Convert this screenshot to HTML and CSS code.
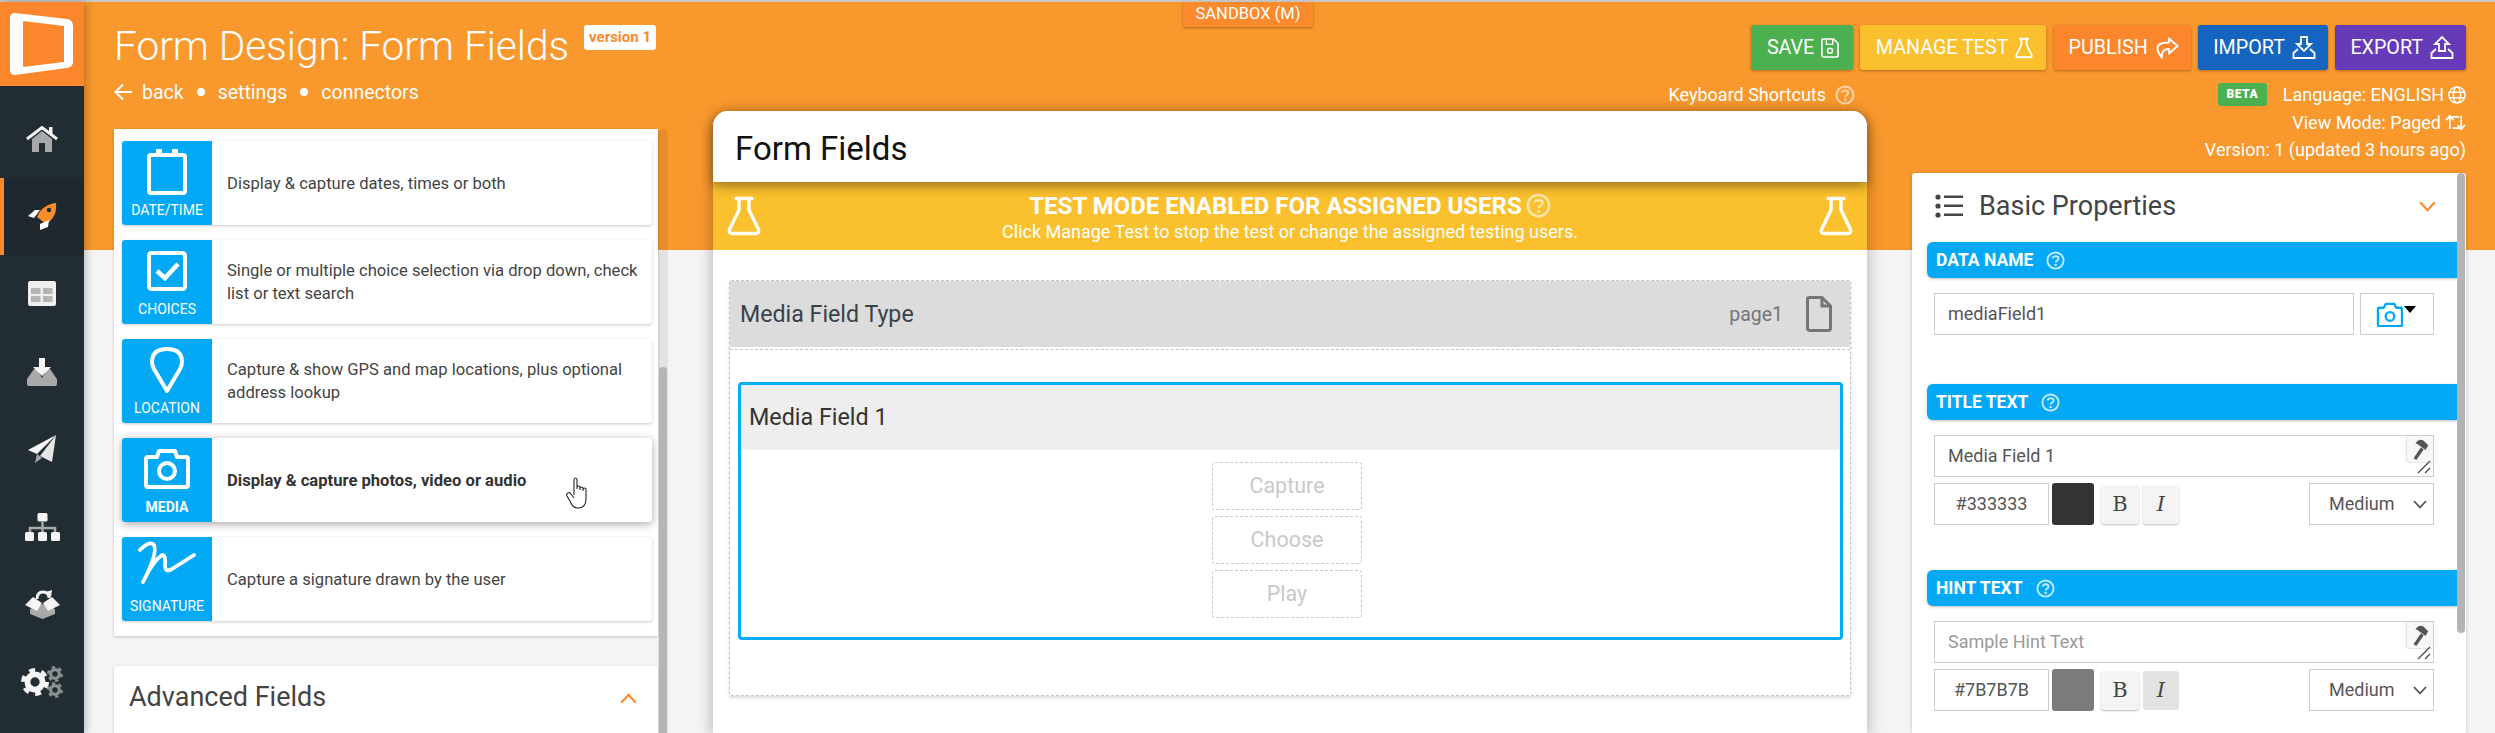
FILE: index.html
```html
<!DOCTYPE html>
<html lang="en">
<head>
<meta charset="utf-8">
<title>Form Design: Form Fields</title>
<link rel="stylesheet" href="styles.css">
</head>
<body>
<svg class="defs" width="0" height="0" aria-hidden="true">
  <symbol id="flask" viewBox="0 0 34 40"><path d="M9 2.500H25M12 2.500V14L2.500 33.500Q1.500 37.500 5.500 37.500H28.500Q32.500 37.500 31.500 33.500L22 14V2.500" fill="none" stroke="currentColor" stroke-width="3.400" stroke-linejoin="round" stroke-linecap="round"/></symbol>
  <symbol id="help" viewBox="0 0 20 20"><circle cx="10" cy="10" r="8.500" fill="none" stroke="currentColor" stroke-width="2"/><path d="M7 7.800C7 4.800 13.200 4.800 13.200 8C13.200 10 10.200 10 10.200 12.200" fill="none" stroke="currentColor" stroke-width="2"/><circle cx="10.200" cy="14.800" r="1.300" fill="currentColor"/></symbol>
  <symbol id="hammer" viewBox="0 0 20 24"><path d="M3 22 11 10 14 12.500 6 24Z" fill="#555"/><path d="M5 6Q9 0 14 3L19 8 16 13 8 7Q7 6 5 6Z" fill="#555"/></symbol>
  <symbol id="chev" viewBox="0 0 14 9"><path d="M1 1 7 7.500 13 1" fill="none" stroke="currentColor" stroke-width="1.800"/></symbol>
  <symbol id="gear" viewBox="0 0 24 24"><circle cx="12" cy="12" r="6.500" fill="none" stroke="currentColor" stroke-width="5"/><circle cx="12" cy="12" r="10" fill="none" stroke="currentColor" stroke-width="4" stroke-dasharray="5 5.470"/></symbol>
  <symbol id="grip" viewBox="0 0 14 14"><path d="M1 13 13 1M8 13 13 8" stroke="#444" stroke-width="1.200" fill="none"/></symbol>
</svg>
<div class="app">
  <nav class="sidebar">
    <div class="logo">
      <svg viewBox="0 0 84 84" width="84" height="84"><path fill-rule="evenodd" fill="#fff" d="M15 11 67 17Q73 18 73 24V60Q73 65 67 66L15 73Q10 73 10 68V16Q10 11 15 11ZM23 19V65L64 60V24Z"/></svg>
    </div>
    <ul class="nav">
      <li class="nav-item">
        <svg viewBox="0 0 32 26" width="32" height="26"><path d="M6 13 16 5 26 13V26H19V17H13V26H6Z" fill="#a7a9ab"/><path d="M1 13 16 1.500 31 13" fill="none" stroke="#f2f2f2" stroke-width="3"/><rect x="23" y="1" width="3.500" height="7" fill="#f2f2f2"/></svg>
      </li>
      <li class="nav-item is-active">
        <svg viewBox="0 0 29 29" width="29" height="29"><path d="M28 1C29 11 25 18 18 22L9 15C12 7 19 2 28 1Z" fill="#fb8c2c"/><circle cx="21" cy="8" r="2.300" fill="#212b31"/><path d="M0 14 7 8H12L6 16Z" fill="#fff"/><path d="M12 28 12 22 21 18 20 25Z" fill="#fff"/></svg>
      </li>
      <li class="nav-item">
        <svg viewBox="0 0 28 25" width="28" height="25"><rect width="28" height="25" rx="2" fill="#efefef"/><g fill="#b5b5b5"><rect x="3" y="7" width="9.500" height="6"/><rect x="15" y="7" width="9.500" height="6"/><rect x="3" y="15" width="9.500" height="6"/><rect x="15" y="15" width="9.500" height="6"/></g></svg>
      </li>
      <li class="nav-item">
        <svg viewBox="0 0 32 28" width="32" height="28"><path d="M8 11 1 21V26Q1 28 3 28H29Q31 28 31 26V21L24 11 21 11 16 20 11 11Z" fill="#a7a9ab"/><path d="M13 0H19V9H25L16 18 7 9H13Z" fill="#f5f5f5"/></svg>
      </li>
      <li class="nav-item">
        <svg viewBox="0 0 29 28" width="29" height="28"><path d="M0 15 28 0 9 19Z" fill="#f5f5f5"/><path d="M9 19 7 28 14 23Z" fill="#a7a9ab"/><path d="M28 0 24 27 12 21Z" fill="#e6e6e6"/></svg>
      </li>
      <li class="nav-item">
        <svg viewBox="0 0 35 28" width="35" height="28"><path d="M17.500 9V19M5 19V15H30V19" fill="none" stroke="#a7a9ab" stroke-width="2.500"/><g fill="#f5f5f5"><rect x="12.500" width="10" height="8.500" rx="1.500"/><rect y="19" width="9" height="9" rx="1.500"/><rect x="13" y="19" width="9" height="9" rx="1.500"/><rect x="26" y="19" width="9" height="9" rx="1.500"/></g></svg>
      </li>
      <li class="nav-item">
        <svg viewBox="0 0 35 29" width="35" height="29"><path d="M17.500 14 30 19V24L17.500 29 5 24V19Z" fill="#a7a9ab"/><path d="M0 15 8 7 17 13 12 21ZM35 15 27 7 18 13 23 21Z" fill="#f5f5f5"/><path d="M12 9Q12 2 18 2T24 8" fill="none" stroke="#f5f5f5" stroke-width="3"/><path d="M21 2 27 0 26 7Z" fill="#f5f5f5"/></svg>
      </li>
      <li class="nav-item">
        <div class="gears">
          <svg class="gear-big" width="28" height="28"><use href="#gear"/></svg>
          <div class="gears-small">
            <svg width="16" height="16"><use href="#gear"/></svg>
            <svg width="16" height="16"><use href="#gear"/></svg>
          </div>
        </div>
      </li>
    </ul>
  </nav>

  <main class="main">
    <div class="sandbox">SANDBOX (M)</div>

    <section class="col-left">
      <div class="title-row">
        <h1 class="page-title">Form Design: Form Fields</h1>
        <span class="version-badge">version 1</span>
      </div>
      <div class="crumbs">
        <svg width="18" height="18" viewBox="0 0 18 18"><path d="M9 1.500 1.500 9 9 16.500M1.500 9H18" fill="none" stroke="#fff" stroke-width="2"/></svg>
        <span class="crumb-back">back</span><i class="dot"></i><span>settings</span><i class="dot"></i><span>connectors</span>
      </div>

      <div class="scroll-track"><div class="scroll-thumb"></div></div>

      <div class="panel field-list">
        <article class="field-card">
          <div class="tile">
            <svg viewBox="0 0 40 46" width="40" height="46"><path d="M4 6H36Q38 6 38 8V42Q38 44 36 44H4Q2 44 2 42V8Q2 6 4 6Z" fill="none" stroke="#fff" stroke-width="4"/><rect x="9" width="6" height="8" rx="1" fill="#fff"/><rect x="25" width="6" height="8" rx="1" fill="#fff"/></svg>
            <span>DATE/TIME</span>
          </div>
          <p>Display &amp; capture dates, times or both</p>
        </article>
        <article class="field-card">
          <div class="tile">
            <svg viewBox="0 0 40 40" width="40" height="40"><rect x="2" y="2" width="36" height="36" rx="2.500" fill="none" stroke="#fff" stroke-width="4"/><path d="M10 20 18 27 31 13" fill="none" stroke="#fff" stroke-width="4.500"/></svg>
            <span>CHOICES</span>
          </div>
          <p>Single or multiple choice selection via drop down, check list or text search</p>
        </article>
        <article class="field-card">
          <div class="tile">
            <svg viewBox="0 0 34 46" width="34" height="46"><path d="M17 44 4 22Q2 18 2 15 2 2 17 2T32 15Q32 18 30 22Z" fill="none" stroke="#fff" stroke-width="4" stroke-linejoin="round"/></svg>
            <span>LOCATION</span>
          </div>
          <p>Capture &amp; show GPS and map locations, plus optional address lookup</p>
        </article>
        <article class="field-card is-hover">
          <div class="tile">
            <svg viewBox="0 0 46 40" width="46" height="40"><path d="M4 8H13L15 2H31L33 8H42Q44 8 44 10V36Q44 38 42 38H4Q2 38 2 36V10Q2 8 4 8Z" fill="none" stroke="#fff" stroke-width="4" stroke-linejoin="round"/><circle cx="23" cy="22" r="8" fill="none" stroke="#fff" stroke-width="4"/></svg>
            <span>MEDIA</span>
          </div>
          <p>Display &amp; capture photos, video or audio</p>
          <svg class="hand" viewBox="0 0 26 32" width="26" height="32"><path d="M8 18V3Q8 1 9.500 1T11 3V12M11 12V10.500Q11 9 12.500 9T14 10.500V13M14 11.500Q14 10 15.500 10T17 11.500V14M17 12.500Q17 11 18.500 11T20 12.500V22Q20 31 12 31 7 31 5 26L1 19Q0 17 2 16T5 17L8 21" fill="#fff" stroke="#222" stroke-width="1.100"/></svg>
        </article>
        <article class="field-card">
          <div class="tile">
            <svg class="sig-icon" viewBox="0 0 58 44" width="58" height="44"><path d="M2 9Q12-1 16 4 20 12 5 41 15 20 24 14 28 14 27 24 27 32 34 28L56 14" fill="none" stroke="#fff" stroke-width="3.800" stroke-linecap="round" stroke-linejoin="round"/></svg>
            <span>SIGNATURE</span>
          </div>
          <p>Capture a signature drawn by the user</p>
        </article>
      </div>

      <div class="panel advanced">
        <h2>Advanced Fields</h2>
        <svg class="adv-chev" width="17" height="11"><use href="#chev"/></svg>
      </div>
    </section>

    <div class="actions">
      <button class="btn btn-green">SAVE
        <svg viewBox="0 0 20 22" width="18" height="20"><path d="M2 1H14L19 6V19Q19 21 17 21H3Q1 21 1 19V2Z" fill="none" stroke="#fff" stroke-width="1.800"/><path d="M6 1V7H13V1" fill="none" stroke="#fff" stroke-width="1.600"/><circle cx="10" cy="14" r="2.800" fill="none" stroke="#fff" stroke-width="1.600"/></svg>
      </button>
      <button class="btn btn-yellow">MANAGE TEST <svg width="18" height="22"><use href="#flask"/></svg></button>
      <button class="btn btn-orange">PUBLISH
        <svg viewBox="0 0 24 22" width="24" height="22"><path d="M14 1.500 22.500 9 14 16.500V12Q6 12 7 20.500 1 14 3 9 5 5.500 14 5.500Z" fill="none" stroke="#fff" stroke-width="2" stroke-linejoin="round"/></svg>
      </button>
      <button class="btn btn-blue">IMPORT
        <svg viewBox="0 0 24 24" width="24" height="24"><path d="M9 1H15V8H19L12 15 5 8H9Z" fill="none" stroke="#fff" stroke-width="1.800"/><path d="M6 13 1.500 17V22H22.500V17L18 13" fill="none" stroke="#fff" stroke-width="1.800"/></svg>
      </button>
      <button class="btn btn-purple">EXPORT
        <svg viewBox="0 0 24 24" width="24" height="24"><path d="M9 15V8H5L12 1 19 8H15V15Z" fill="none" stroke="#fff" stroke-width="1.800"/><path d="M6 13 1.500 17V22H22.500V17L18 13" fill="none" stroke="#fff" stroke-width="1.800"/></svg>
      </button>
    </div>

    <section class="col-mid">
      <div class="shortcuts">Keyboard Shortcuts <svg class="help-soft" width="20" height="20"><use href="#help"/></svg></div>
      <div class="form-card">
        <header class="form-head">Form Fields</header>
        <div class="test-banner">
          <svg width="34" height="40"><use href="#flask"/></svg>
          <div class="test-text">
            <strong>TEST MODE ENABLED FOR ASSIGNED USERS <svg class="help-soft" width="25" height="25"><use href="#help"/></svg></strong>
            <span>Click Manage Test to stop the test or change the assigned testing users.</span>
          </div>
          <svg width="34" height="40"><use href="#flask"/></svg>
        </div>
        <div class="form-body">
          <div class="page-box">
            <div class="page-head">
              <span class="page-name">Media Field Type</span>
              <span class="page-id">page1</span>
              <svg viewBox="0 0 26 36" width="26" height="36"><path d="M3 1.500H16L24.500 10V32Q24.500 34.500 22 34.500H4Q1.500 34.500 1.500 32V3Q1.500 1.500 3 1.500Z" fill="none" stroke="#757575" stroke-width="3"/><path d="M16 1.500V10H24.500" fill="none" stroke="#757575" stroke-width="3"/></svg>
            </div>
            <div class="page-inner">
              <div class="media-field">
                <div class="media-head">Media Field 1</div>
                <div class="media-btns">
                  <div class="ghost-btn">Capture</div>
                  <div class="ghost-btn">Choose</div>
                  <div class="ghost-btn">Play</div>
                </div>
              </div>
            </div>
          </div>
        </div>
      </div>
    </section>

    <section class="col-right">
      <div class="info">
        <div class="info-line"><span class="beta">BETA</span>Language: ENGLISH
          <svg viewBox="0 0 20 20" width="18" height="18"><g fill="none" stroke="#fff" stroke-width="1.600"><circle cx="10" cy="10" r="9"/><ellipse cx="10" cy="10" rx="4" ry="9"/><path d="M1.500 7H18.500M1.500 13H18.500"/></g></svg>
        </div>
        <div class="info-line">View Mode: Paged
          <svg viewBox="0 0 22 18" width="21" height="17"><path d="M5 16V3M1 6.500 5 2 9 6.500M5 3H15M17 2V15M13 11.500 17 16 21 11.500M17 15H8" fill="none" stroke="#fff" stroke-width="1.800"/></svg>
        </div>
        <div class="info-line">Version: 1 (updated 3 hours ago)</div>
      </div>
      <div class="props">
        <div class="props-thumb"></div>
        <header class="props-head">
          <svg viewBox="0 0 28 24" width="28" height="24"><g fill="#444"><circle cx="3" cy="3" r="2.600"/><circle cx="3" cy="12" r="2.600"/><circle cx="3" cy="21" r="2.600"/><rect x="9" y="1.500" width="19" height="2.500"/><rect x="9" y="10.500" width="19" height="2.500"/><rect x="9" y="19.500" width="19" height="2.500"/></g></svg>
          <h2>Basic Properties</h2>
          <svg class="props-chev" width="17" height="11"><use href="#chev"/></svg>
        </header>

        <div class="prop-bar">DATA NAME <svg width="19" height="19"><use href="#help"/></svg></div>
        <div class="prop-row prop-name">
          <div class="box box-grow">mediaField1</div>
          <div class="box box-type">
            <svg viewBox="0 0 28 26" width="27" height="25"><path d="M3 6H8L10 2H19L21 6H26Q27 6 27 7V24Q27 25 26 25H3Q2 25 2 24V7Q2 6 3 6Z" fill="none" stroke="#03a9f4" stroke-width="2.400" stroke-linejoin="round"/><circle cx="14.500" cy="15" r="4.500" fill="none" stroke="#03a9f4" stroke-width="2.400"/></svg>
            <i class="caret"></i>
          </div>
        </div>

        <div class="prop-bar">TITLE TEXT <svg width="19" height="19"><use href="#help"/></svg></div>
        <div class="box box-text">Media Field 1
          <span class="hammer"><svg width="20" height="22"><use href="#hammer"/></svg></span>
          <svg class="grip" width="14" height="14"><use href="#grip"/></svg>
        </div>
        <div class="prop-row style-row">
          <div class="box box-hex">#333333</div>
          <div class="swatch swatch-dark"></div>
          <div class="fmt-btn fmt-b">B</div>
          <div class="fmt-btn fmt-i">I</div>
          <div class="box box-select">Medium <svg width="14" height="9"><use href="#chev"/></svg></div>
        </div>

        <div class="prop-bar">HINT TEXT <svg width="19" height="19"><use href="#help"/></svg></div>
        <div class="box box-text box-hint">Sample Hint Text
          <span class="hammer"><svg width="20" height="22"><use href="#hammer"/></svg></span>
          <svg class="grip" width="14" height="14"><use href="#grip"/></svg>
        </div>
        <div class="prop-row style-row">
          <div class="box box-hex">#7B7B7B</div>
          <div class="swatch swatch-mid"></div>
          <div class="fmt-btn fmt-b">B</div>
          <div class="fmt-btn fmt-i is-on">I</div>
          <div class="box box-select">Medium <svg width="14" height="9"><use href="#chev"/></svg></div>
        </div>
      </div>
    </section>
  </main>
</div>
</body>
</html>
```

FILE: styles.css
```css
* { box-sizing: border-box; }
html, body { margin: 0; height: 100%; overflow: hidden; }
body { font-family: Roboto, "Liberation Sans", sans-serif; color: #444; background: #f4f4f4; }
.defs { position: absolute; }
h1, h2, p, ul { margin: 0; padding: 0; font-weight: inherit; }

.app { display: flex; height: 733px; border-top: 2px solid #c9c9c9; }

/* sidebar */
.sidebar { flex: 0 0 84px; background: #222d33; box-shadow: 2px 0 8px rgba(0,0,0,.25); position: relative; z-index: 3; }
.logo { height: 84px; background: #fb862c; display: flex; align-items: center; justify-content: center; }
.nav { list-style: none; padding-top: 14px; }
.nav-item { height: 77.600px; display: flex; align-items: center; justify-content: center; }
.nav-item.is-active { background: #1f282e; box-shadow: inset 4px 0 0 #fb862c; }
.gears { display: flex; align-items: center; gap: 0; color: #f5f5f5; }
.gears-small { display: flex; flex-direction: column; gap: 0; color: #8b8f91; margin-left: -2px; }
.gears-small svg { display: block; }

/* main */
.main {
  position: relative; flex: 1; min-width: 0; height: 100%;
  background: linear-gradient(#f9982d 248px, #f4f4f4 248px);
  padding: 0 29px 0 30px;
  display: grid;
  grid-template-columns: 554px 1154px 554px;
  grid-template-rows: 68px 1fr;
  column-gap: 45px;
}
.sandbox {
  position: absolute; top: 0; left: 1099px; width: 130px; height: 25px;
  background: #fb8a2c; color: #fff; font-size: 16.500px; line-height: 24px; text-align: center;
  border-radius: 0 0 3px 3px; box-shadow: 0 1px 3px rgba(0,0,0,.3);
}

/* left column */
.col-left { grid-column: 1; grid-row: 1 / 3; position: relative; padding-top: 20px; min-height: 0; }
.title-row { display: flex; height: 48px; gap: 15px; }
.page-title { font-size: 40.600px; font-weight: 300; line-height: 48px; color: #fff; white-space: nowrap; }
.version-badge {
  align-self: flex-start; margin-top: 3px; height: 25px; width: 72px; background: #fff; border-radius: 3px;
  color: #fb8a2c; font-size: 15px; font-weight: 700; line-height: 25px; text-align: center;
}
.crumbs { display: flex; align-items: center; height: 26px; margin-top: 9px; color: #fff; font-size: 19.500px; font-weight: 400; }
.crumb-back { margin-left: 10px; }
.dot { width: 8px; height: 8px; border-radius: 50%; background: #fff; margin: 0 13px; }

.scroll-track { position: absolute; top: 127px; bottom: 0; left: 544px; width: 10px; background: rgba(0,0,0,.07); border-radius: 5px 5px 0 0; }
.scroll-thumb { position: absolute; top: 238px; bottom: 0; left: 1px; right: 1px; background: #b5b5b5; border-radius: 4px 4px 0 0; }

.panel { width: 544px; background: #fff; box-shadow: 0 1px 3px rgba(0,0,0,.2); }
.field-list { margin-top: 24px; padding: 12px 6px 15px 8px; display: flex; flex-direction: column; gap: 15px; height: 507px; }
.field-card { position: relative; display: flex; height: 84px; flex: none; background: #fff; border-radius: 3px; box-shadow: 0 1px 3px rgba(0,0,0,.22); overflow: hidden; align-items: center; }
.field-card.is-hover { box-shadow: 0 2px 9px rgba(0,0,0,.35); }
.tile {
  flex: 0 0 90px; height: 100%; background: #03a9f4; color: #fff; font-size: 14px;
  display: flex; flex-direction: column; align-items: center; padding-bottom: 7px;
}
.tile svg { flex: 0 0 auto; margin: auto 0; }
.tile .sig-icon { margin: 4px 0 auto; }
.tile span { line-height: 16px; }
.field-card p { padding: 0 12px 0 15px; font-size: 16.600px; line-height: 23px; color: #444; }
.is-hover p { font-weight: 700; color: #333; }
.is-hover .tile span { font-weight: 700; }
.hand { position: absolute; left: 444px; top: 39px; }

.advanced { margin-top: 30px; height: 100px; padding: 12px 15px 0; display: flex; justify-content: space-between; border-radius: 3px 3px 0 0; }
.advanced h2 { font-size: 27px; font-weight: 400; line-height: 38px; color: #444; }
.adv-chev { color: #fb8a2c; transform: rotate(180deg); margin: 15px 6px 0 0; }

/* actions */
.actions { grid-column: 2 / 4; grid-row: 1; padding-top: 23px; display: flex; justify-content: flex-end; gap: 7.500px; }
.btn {
  height: 45px; padding: 0 12px 0 15px; border: 0; border-radius: 3px; color: #fff;
  font: 400 19.700px Roboto, sans-serif; display: flex; align-items: center; justify-content: center; gap: 7px;
  box-shadow: 0 1px 3px rgba(0,0,0,.3);
}
.btn-green { background: #4caf50; width: 102px; }
.btn-yellow { background: #fbc02d; width: 186px; }
.btn-orange { background: #fb862c; }
.btn-blue { background: #1565c0; }
.btn-purple { background: #673ab7; }

/* middle column */
.col-mid { grid-column: 2; grid-row: 2; min-height: 0; display: flex; flex-direction: column; }
.shortcuts { height: 41px; padding: 15px 12px 0 0; display: flex; justify-content: flex-end; gap: 9px; color: #fff; font-size: 18px; line-height: 20px; }
.help-soft { color: rgba(255,255,255,.6); flex: none; }
.form-card { flex: 1; background: #fff; border-radius: 15px 15px 0 0; box-shadow: 0 3px 16px rgba(0,0,0,.3); min-height: 0; }
.form-head { height: 71px; padding-left: 22px; font-size: 33px; line-height: 76px; color: #111; background: #fff; border-radius: 15px 15px 0 0; position: relative; box-shadow: 0 4px 12px rgba(0,0,0,.4); }
.test-banner { height: 68px; background: #fbc02d; color: #fff; display: flex; align-items: center; justify-content: space-between; padding: 0 14px; }
.test-text { display: flex; flex-direction: column; align-items: center; padding-top: 3px; }
.test-text strong { display: flex; align-items: center; gap: 4px; font-size: 24px; font-weight: 700; line-height: 28px; }
.test-text span { font-size: 18px; line-height: 24px; }
.form-body { padding: 30px 16px 0; }
.page-box { height: 416px; border: 1px dashed #c4c4c4; border-radius: 2px; box-shadow: 0 2px 3px rgba(0,0,0,.15); }
.page-head { height: 66px; background: #dcdcdc; display: flex; align-items: center; padding: 0 18px 0 10px; border-radius: 2px; }
.page-name { flex: 1; font-size: 23.200px; color: #37424a; }
.page-id { font-size: 19.500px; color: #757575; margin-right: 23px; }
.page-inner { margin-top: 2px; border-top: 1px dashed #c4c4c4; padding: 32px 7px 0 8px; }
.media-field { height: 258px; border: 3px solid #03adf8; border-radius: 4px; }
.media-head { height: 65px; background: #eee; padding-left: 8px; font-size: 23.300px; line-height: 64px; color: #333; }
.media-btns { padding: 12px 7px 0 0; display: flex; flex-direction: column; align-items: center; gap: 6px; }
.ghost-btn { width: 150px; height: 48px; border: 1px dashed #c8c8c8; border-radius: 3px; color: #c9c9c9; font-size: 21.500px; line-height: 46px; text-align: center; }

/* right column */
.col-right { grid-column: 3; grid-row: 2; min-height: 0; display: flex; flex-direction: column; }
.info { height: 103px; padding-top: 11px; color: #fff; font-size: 18px; }
.info-line { height: 27.500px; display: flex; justify-content: flex-end; align-items: center; gap: 4px; }
.beta { width: 49px; height: 23px; background: #4caf50; border-radius: 3px; font-size: 12px; font-weight: 900; line-height: 23px; text-align: center; margin-right: 12px; letter-spacing: .5px; }
.props { position: relative; flex: 1; background: #fff; padding-left: 15px; border-radius: 3px 3px 0 0; box-shadow: 0 1px 4px rgba(0,0,0,.2); min-height: 0; overflow: hidden; }
.props-thumb { position: absolute; right: 1px; top: 0; width: 8px; height: 460px; background: #b4b4b4; border-radius: 4px; }
.props-head { height: 69px; display: flex; align-items: center; padding: 0 0 3px 8px; }
.props-head h2 { font-size: 27px; font-weight: 400; color: #444; margin-left: 16px; flex: 1; }
.props-chev { color: #fb8a2c; margin-right: 30px; }
.prop-bar {
  width: 530px; height: 36px; background: #03a9f4; color: #fff; padding-left: 9px;
  border-radius: 6px 0 0 6px; font-size: 17.500px; font-weight: 700; display: flex; align-items: center; gap: 13px;
  box-shadow: 0 1px 3px rgba(0,0,0,.25);
}
.prop-bar svg { color: rgba(255,255,255,.75); }
.prop-row { display: flex; margin-left: 7px; width: 500px; }
.box { height: 42px; border: 1px solid #ccc; background: #fff; font-size: 18px; line-height: 40px; color: #555; padding-left: 13px; }
.prop-name { gap: 6px; margin-top: 15px; margin-bottom: 49px; }
.box-grow { flex: 1; }
.box-type { flex: 0 0 74px; display: flex; align-items: center; padding-left: 15px; }
.caret { width: 0; height: 0; border: 6.500px solid transparent; border-top: 7px solid #000; border-bottom: 0; margin: -9px 0 0 1px; }
.box-text { position: relative; margin: 15px 0 0 7px; width: 500px; }
.box-hint { color: #9a9a9a; }
.hammer { position: absolute; right: 0; top: 0; width: 26px; height: 26px; background: #f7f7f7; border-radius: 0 0 0 3px; box-shadow: -1px 1px 1px rgba(0,0,0,.12); display: flex; align-items: center; justify-content: center; }
.grip { position: absolute; right: 2px; bottom: 2px; }
.style-row { margin-top: 6px; margin-bottom: 45px; align-items: center; }
.box-hex { flex: 0 0 115px; padding: 0; text-align: center; }
.swatch { flex: 0 0 42px; height: 42px; margin-left: 3px; border-radius: 3px; }
.swatch-dark { background: #333; }
.swatch-mid { background: #7b7b7b; }
.fmt-btn { flex: 0 0 38px; height: 39px; background: #f4f4f4; border-radius: 3px; box-shadow: 0 1px 2px rgba(0,0,0,.25); font-family: "DejaVu Serif", serif; font-size: 21px; line-height: 39px; text-align: center; color: #444; }
.fmt-b { margin-left: 7px; }
.fmt-i { flex-basis: 36px; margin-left: 4px; font-style: italic; }
.fmt-i.is-on { background: #e2e2e2; box-shadow: none; }
.box-select { margin-left: auto; flex: 0 0 125px; padding: 0 6px 0 19px; display: flex; align-items: center; justify-content: space-between; }
```
